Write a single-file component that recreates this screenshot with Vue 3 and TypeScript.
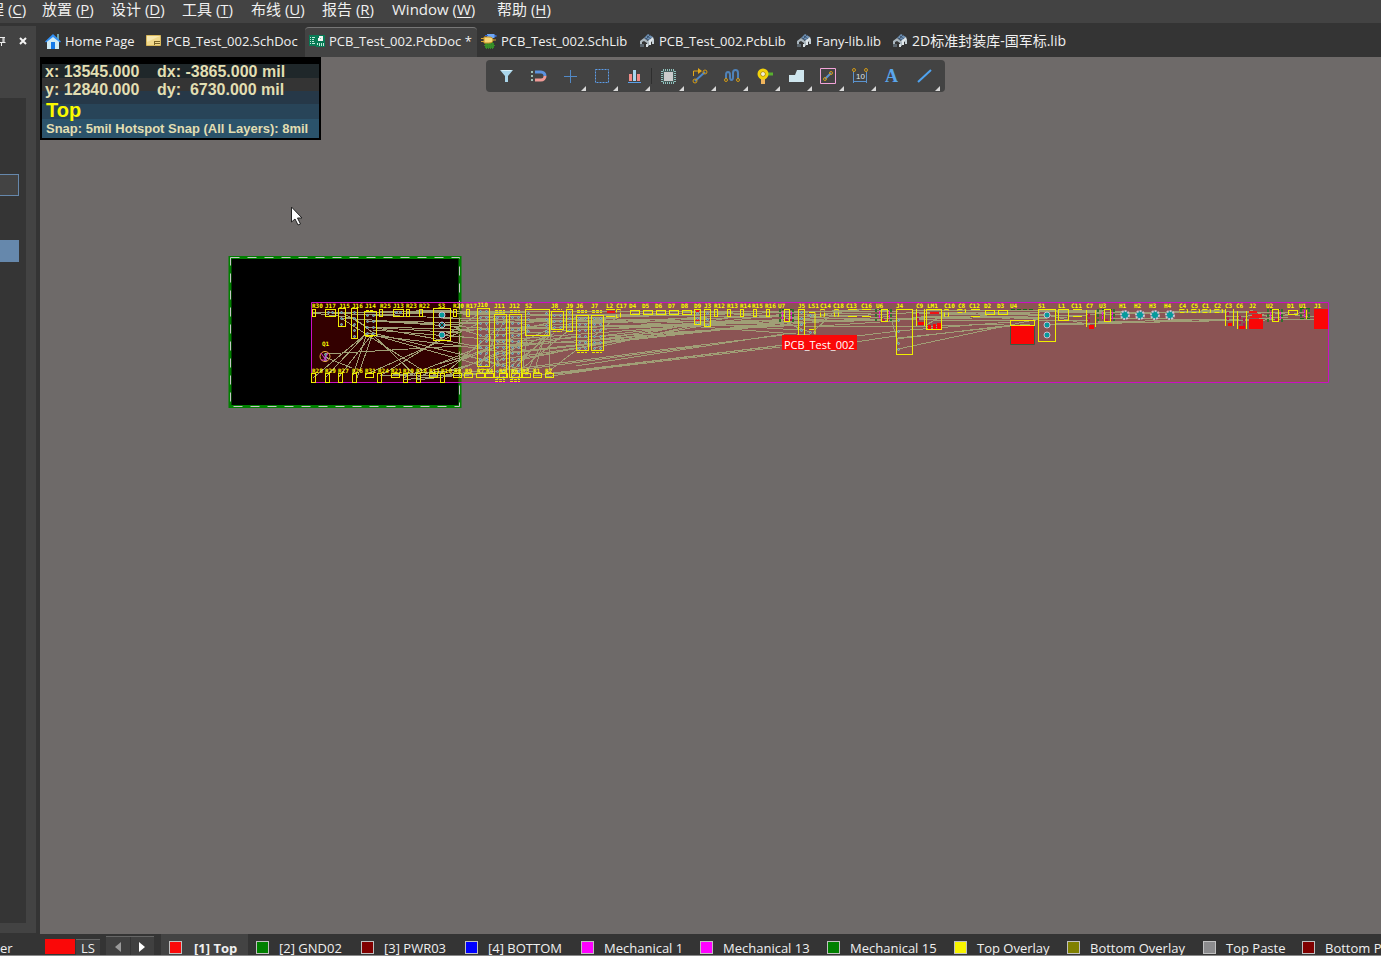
<script setup lang="ts">
interface Menu { label: string; key: string; width: number }
interface DocTab { title: string; icon: string; width: number; active?: boolean; large?: boolean }
interface Layer { name: string; color: string; width: number; active?: boolean }
type Box = [number, number, number, number]
type Tag = [string, number]
type Point = [number, number]

const menus: Menu[] = [
  { label: '程', key: 'C', width: 53 },
  { label: '放置', key: 'P', width: 69 },
  { label: '设计', key: 'D', width: 71 },
  { label: '工具', key: 'T', width: 69 },
  { label: '布线', key: 'U', width: 71 },
  { label: '报告', key: 'R', width: 70 },
  { label: 'Window', key: 'W', width: 105 },
  { label: '帮助', key: 'H', width: 70 },
]

const tabs: DocTab[] = [
  { title: 'Home Page', icon: 'home', width: 101 },
  { title: 'PCB_Test_002.SchDoc', icon: 'sch', width: 163 },
  { title: 'PCB_Test_002.PcbDoc *', icon: 'pcb', width: 172, active: true },
  { title: 'PCB_Test_002.SchLib', icon: 'schlib', width: 158 },
  { title: 'PCB_Test_002.PcbLib', icon: 'lib', width: 157 },
  { title: 'Fany-lib.lib', icon: 'lib', width: 96 },
  { title: '2D标准封装库-国军标.lib', icon: 'lib', width: 184, large: true },
]

const layers: Layer[] = [
  { name: '[1] Top', color: '#fa0a0a', width: 87, active: true },
  { name: '[2] GND02', color: '#008000', width: 105 },
  { name: '[3] PWR03', color: '#800000', width: 104 },
  { name: '[4] BOTTOM', color: '#0000ff', width: 116 },
  { name: 'Mechanical 1', color: '#ff00ff', width: 119 },
  { name: 'Mechanical 13', color: '#ff00ff', width: 127 },
  { name: 'Mechanical 15', color: '#008000', width: 127 },
  { name: 'Top Overlay', color: '#f8f400', width: 113 },
  { name: 'Bottom Overlay', color: '#808000', width: 136 },
  { name: 'Top Paste', color: '#8c8c8e', width: 99 },
  { name: 'Bottom Paste', color: '#800000', width: 120 },
]

const tools: { name: string; menu: boolean }[] = [
  { name: 'Filter', menu: false },
  { name: 'Snap', menu: false },
  { name: 'Move', menu: true },
  { name: 'Select', menu: true },
  { name: 'Align', menu: true },
  { name: 'Component', menu: true },
  { name: 'Route', menu: true },
  { name: 'Tune', menu: true },
  { name: 'Via', menu: true },
  { name: 'Polygon', menu: true },
  { name: 'Rule', menu: true },
  { name: 'Dimension', menu: true },
  { name: 'Text', menu: false },
  { name: 'Line', menu: true },
]

const topTags: Tag[] = [
  ['R30', 312], ['J17', 325], ['J15', 339], ['J16', 352], ['J14', 365], ['R25', 380], ['J13', 393], ['R23', 406],
  ['R22', 419], ['S3', 438], ['R20', 453], ['R17', 466], ['J11', 494], ['J12', 509], ['S2', 525],
  ['J8', 551], ['J9', 566], ['J6', 576], ['J7', 591], ['L2', 606], ['C17', 616], ['D4', 629], ['D5', 642],
  ['D6', 655], ['D7', 668], ['D8', 681], ['D9', 694], ['J3', 704], ['R12', 714], ['R13', 727], ['R14', 740],
  ['R15', 752], ['R16', 765], ['U7', 778], ['J5', 798], ['LS1', 808], ['C14', 820], ['C18', 833], ['C13', 846],
  ['C16', 861], ['U6', 876], ['J4', 896], ['C9', 916], ['LM1', 927], ['C10', 944], ['C8', 958], ['C12', 969],
  ['D2', 984], ['D3', 997], ['U4', 1010], ['S1', 1038], ['L1', 1058], ['C11', 1071], ['C7', 1086], ['U3', 1099],
  ['H1', 1119], ['H2', 1134], ['H3', 1149], ['H4', 1164], ['C4', 1179], ['C5', 1191], ['C1', 1202], ['C2', 1214],
  ['C3', 1225], ['C6', 1236], ['J2', 1249], ['U2', 1266], ['D1', 1287], ['U1', 1299], ['J1', 1314],
]

const bottomTags: Tag[] = [
  ['R28', 312], ['R29', 325], ['R27', 338], ['R26', 352], ['R31', 365], ['R24', 378], ['R21', 391], ['R19', 403],
  ['R18', 416], ['R11', 429], ['R10', 441], ['R8', 454], ['R9', 465], ['R7', 477], ['R4', 486], ['R5', 499],
  ['R6', 511], ['R3', 522], ['R1', 533], ['R2', 545],
]

const headers: Box[] = [
  [325, 309, 10, 7], [338, 308, 7, 18], [351, 308, 6, 30], [364, 311, 12, 24], [393, 309, 10, 7],
  [433, 308, 17, 32], [477, 308, 12, 58], [494, 314, 12, 63], [509, 314, 12, 63], [525, 309, 24, 26],
  [551, 311, 12, 18], [566, 309, 6, 22], [576, 315, 12, 35], [591, 315, 12, 35], [694, 309, 6, 15],
  [704, 309, 6, 17], [784, 309, 5, 12], [798, 309, 6, 26], [881, 309, 6, 12], [896, 309, 16, 45],
  [926, 309, 15, 20], [1010, 320, 24, 5], [1038, 309, 17, 32], [1058, 309, 10, 11], [1104, 309, 6, 12],
  [1272, 309, 6, 12],
]
const upright = [312, 379, 406, 419, 453, 466, 714, 727, 740, 753, 766]
const diodes = [630, 643, 656, 669, 682, 985, 998, 1288]
const lowTall = [311, 325, 338, 352, 377, 403, 416, 440]
const lowFlat = [365, 391, 429, 453, 464, 476, 485, 499, 511, 522, 533, 545]
const boxes: Box[] = [
  ...headers,
  ...upright.map((x): Box => [x, 309, 3, 7]),
  ...diodes.map((x): Box => [x, 310, 9, 4]),
  ...lowTall.map((x): Box => [x, 373, 4, 9]),
  ...lowFlat.map((x): Box => [x, 373, 8, 4]),
]
const gapped: Box[] = [
  [616, 309, 4, 8], [820, 309, 4, 7], [834, 309, 4, 7], [944, 309, 4, 7], [957, 309, 8, 3],
  [1179, 309, 8, 3], [1191, 309, 8, 3], [1202, 309, 8, 3], [1214, 309, 8, 3],
]
const caps: Box[] = [
  [916, 309, 8, 17], [1086, 310, 9, 17], [1225, 309, 8, 17], [1237, 311, 9, 18],
]
const bars = [606, 848, 862, 971, 1073]

function pads(x: number, y: number, cols: number, rows: number, dx: number, dy: number): Point[] {
  const out: Point[] = []
  for (let r = 0; r < rows; r++) for (let c = 0; c < cols; c++) out.push([x + c * dx, y + r * dy])
  return out
}
const smallPads: Point[] = [
  ...pads(328, 312, 2, 1, 4, 6), ...pads(341, 312, 1, 3, 6, 6), ...pads(354, 312, 1, 5, 6, 6),
  ...pads(367, 315, 2, 4, 6, 6), ...pads(396, 312, 2, 1, 4, 6), ...pads(480, 311, 2, 10, 6, 6),
  ...pads(497, 317, 2, 11, 6, 6), ...pads(512, 317, 2, 11, 6, 6), ...pads(528, 313, 2, 4, 18, 6),
  ...pads(554, 315, 2, 3, 6, 6), ...pads(569, 312, 1, 4, 6, 6), ...pads(579, 318, 2, 6, 6, 6),
  ...pads(594, 318, 2, 6, 6, 6), ...pads(697, 313, 1, 3, 6, 5), ...pads(707, 313, 1, 3, 6, 6),
  ...pads(801, 312, 1, 4, 6, 6), [898, 320], [898, 331], [898, 343], [898, 349],
  ...pads(810, 315, 2, 1, 4, 0), ...pads(810, 332, 2, 1, 4, 0), ...pads(325, 354, 1, 3, 0, 3),
]
const bigPads: Point[] = [
  [442, 315], [442, 325], [442, 335], [1047, 315], [1047, 325], [1047, 335],
]
const holes: Point[] = [[1125, 315], [1140, 315], [1155, 315], [1170, 315]]

const nets: Box[] = [
  [313, 312, 370, 315], [313, 313, 354, 318], [329, 312, 396, 312], [341, 318, 433, 324], [341, 312, 367, 327],
  [354, 318, 373, 333], [367, 315, 480, 311], [373, 315, 453, 318], [367, 321, 480, 323], [373, 321, 497, 329],
  [373, 327, 528, 331], [373, 330, 512, 341], [367, 327, 461, 333], [367, 333, 480, 365], [373, 333, 545, 375],
  [367, 333, 325, 378], [367, 333, 313, 378], [373, 333, 338, 378], [367, 333, 352, 378], [373, 333, 357, 378],
  [371, 333, 418, 378], [376, 336, 461, 346], [371, 327, 480, 347], [325, 354, 442, 347], [442, 347, 576, 342],
  [325, 357, 352, 368], [341, 318, 422, 370], [380, 376, 442, 338], [442, 338, 477, 315], [365, 375, 405, 357],
  [405, 357, 480, 323], [403, 378, 480, 347], [416, 378, 528, 331], [429, 376, 512, 353], [441, 378, 554, 327],
  [380, 376, 461, 370], [391, 375, 461, 375], [403, 380, 480, 371], [416, 380, 497, 371], [380, 312, 453, 310],
  [393, 311, 525, 313], [406, 312, 554, 315], [419, 311, 569, 312], [442, 318, 554, 321], [442, 325, 569, 318],
  [442, 332, 569, 324], [442, 335, 528, 343], [451, 326, 525, 350], [435, 365, 497, 347], [450, 369, 497, 329],
  [461, 314, 700, 316], [461, 321, 800, 312], [461, 312, 896, 311], [480, 317, 784, 311], [480, 323, 870, 315],
  [480, 329, 925, 318], [486, 335, 925, 312], [486, 341, 800, 318], [497, 347, 896, 316], [503, 353, 784, 322],
  [512, 329, 898, 320], [518, 341, 784, 326], [512, 353, 784, 323], [518, 359, 707, 325], [497, 365, 700, 322],
  [461, 376, 660, 350], [660, 350, 784, 335], [512, 371, 700, 346], [533, 376, 784, 345], [545, 377, 660, 360],
  [545, 374, 898, 331], [555, 374, 780, 347], [576, 366, 784, 334], [518, 323, 700, 312], [554, 321, 714, 321],
  [569, 324, 727, 316], [576, 324, 707, 319], [585, 330, 784, 321], [600, 336, 784, 314], [594, 348, 700, 324],
  [579, 342, 707, 330], [600, 318, 800, 330], [579, 318, 810, 335], [585, 342, 740, 316], [569, 330, 512, 377],
  [554, 327, 512, 371], [551, 327, 525, 375], [551, 321, 549, 372], [546, 331, 533, 376], [616, 318, 594, 336],
  [579, 348, 545, 374], [554, 333, 499, 375], [528, 337, 486, 372], [528, 325, 522, 375], [503, 323, 477, 371],
  [486, 323, 499, 365], [488, 317, 528, 325], [503, 335, 554, 321], [518, 329, 576, 318], [518, 347, 576, 336],
  [503, 359, 576, 348], [461, 346, 512, 353], [461, 353, 528, 375], [461, 360, 497, 347], [461, 368, 545, 337],
  [700, 312, 784, 317], [700, 317, 872, 313], [700, 322, 866, 318], [707, 325, 898, 327], [784, 320, 801, 330],
  [784, 322, 810, 332], [815, 330, 832, 314], [804, 321, 878, 320], [804, 327, 896, 321], [855, 342, 896, 336],
  [784, 313, 881, 309], [790, 318, 868, 309], [870, 309, 898, 312], [891, 318, 898, 343],
  [898, 320, 1010, 317], [898, 331, 1010, 322], [896, 339, 1012, 325], [898, 338, 1030, 324], [898, 349, 1038, 319],
  [898, 327, 1005, 324], [912, 311, 1104, 310], [912, 314, 1104, 311], [912, 318, 1086, 315], [920, 316, 1047, 318],
  [925, 312, 1030, 314], [926, 325, 946, 314], [935, 321, 1038, 320], [940, 314, 1047, 315], [957, 312, 1010, 319],
  [980, 317, 1047, 319], [1038, 321, 1090, 320], [1047, 325, 1237, 320], [1047, 315, 1090, 325],
  [1055, 312, 1179, 313], [1058, 318, 1125, 311], [1055, 323, 1120, 323], [1098, 323, 1321, 319],
  [1098, 322, 1240, 319], [1104, 315, 1225, 310], [1110, 318, 1230, 320], [1170, 311, 1249, 312],
  [1179, 312, 1290, 313], [1225, 317, 1272, 315], [1230, 321, 1288, 317], [1250, 310, 1272, 318], [1275, 313, 1315, 317],
  [1283, 316, 1305, 312],
]
</script>

<template>
  <div class="app">
    <nav class="menubar" aria-label="Main menu">
      <button v-for="m in menus" :key="m.label" type="button" class="menu" :style="{ width: m.width + 'px' }">
        {{ m.label }} (<u>{{ m.key }}</u>)
      </button>
    </nav>

    <div class="middle">
      <aside class="side">
        <div class="side-head">
          <button type="button" aria-label="Pin panel">
            <svg width="10" height="10" viewBox="0 0 10 10" fill="none" stroke="#eee"><path d="M1 1.500H8M2.500 1V6M6 1V6M7 1V6M0 6.500H8.500M4.500 7V10" /></svg>
          </button>
          <button type="button" aria-label="Close panel">
            <svg width="8" height="8" viewBox="0 0 8 8" stroke="#f4f4f4" stroke-width="2"><path d="M1 1L7 7M7 1L1 7" /></svg>
          </button>
        </div>
        <div class="side-body">
          <input class="side-input" type="text" aria-label="Search" />
          <div class="side-selected"></div>
        </div>
      </aside>

      <main class="work">
        <nav class="tabs" aria-label="Documents">
          <button v-for="t in tabs" :key="t.title" type="button" class="tab" :class="{ active: t.active, large: t.large }" :style="{ width: t.width + 'px' }">
            <svg v-if="t.icon === 'home'" class="ticon" viewBox="0 0 16 16">
              <path d="M12 1h2v6h-2z" fill="#6aa0a8" /><path d="M2 8L8 3l6 5v8H2z" fill="#cfeaf4" />
              <path d="M0 8.500L8 1l8 7.500-1 1L8 4 1 9.500z" fill="#2f8ff5" /><path d="M6 9h4v7H6z" fill="#1479e8" />
            </svg>
            <svg v-else-if="t.icon === 'sch'" class="ticon" viewBox="0 0 16 16">
              <path d="M.5 2.500h14v10H.5z" fill="#f1d98c" stroke="#d9b85c" /><path d="M1 3h13L1 9z" fill="#f8e8b0" />
              <path d="M8 8.500h6M8 10.500h6M8.500 8v4" stroke="#7a6428" />
            </svg>
            <svg v-else-if="t.icon === 'pcb'" class="ticon" viewBox="0 0 16 16">
              <path d="M0 2h16v12H7v-1H0z" fill="#087a55" /><path d="M1 4.500h1M3 4.500h3M1 6.500h1M3 6.500h2M1 8.500h1M3 8.500h2M1 10.500h1M3 10.500h3" stroke="#bfeadb" />
              <path d="M10 3h4v5H9V5h1z" fill="#f2f6f4" /><path d="M11 5h1v1h-1z" fill="#7cc5ab" />
              <path d="M8.500 10v2M10.500 10v3M12.500 10v3M14.500 10v3" stroke="#bfeadb" />
            </svg>
            <svg v-else-if="t.icon === 'schlib'" class="ticon" viewBox="0 0 16 16">
              <path d="M6 1h7l2 2-2 2H6z" fill="#6ea6f4" /><path d="M4 2.500h3M13 3h3" stroke="#2d65d8" />
              <path d="M4 10h9v5H4z" fill="#2f8c25" /><path d="M5.500 9v7M7.500 9v7M9.500 9v7M11.500 9v7M3 12.500h11" stroke="#3a8c2a" />
              <path d="M3 4h5c3 0 4 1.500 4 3s-1 3-4 3H3z" fill="#f8d678" stroke="#c18f24" /><path d="M0 5.500h3M0 8.500h3M12 7h3" stroke="#d8a32f" />
            </svg>
            <svg v-else class="ticon" viewBox="0 0 16 16">
              <path d="M5 5l4-4 5 3-4 4z" fill="#6f91b4" /><path d="M6 5l4 2M8 3l4 3M7 6l4-4" stroke="#3e5672" />
              <path d="M9 8l5-4 1 3-3 2v3h-2z" fill="#dfe6ea" /><path d="M13 7h2v4h-2z" fill="#c4ced4" />
              <path d="M1 8l4-3 5 4v4l-2-1v-2L5 8 3 9v2H1z" fill="#aab6be" />
              <path d="M1 11h4v3H1z" fill="#5c666e" /><path d="M7 11h2v3H7z" fill="#d8dfe3" />
            </svg>
            <span>{{ t.title }}</span>
          </button>
        </nav>

        <section class="canvas">
          <div class="hud">
            <div class="row r1"><span>x: 13545.000</span><span>dx: -3865.000 mil</span></div>
            <div class="row r2"><span>y: 12840.000</span><span>dy: &nbsp;6730.000 mil</span></div>
            <div class="row r3">Top</div>
            <div class="row r4">Snap: 5mil Hotspot Snap (All Layers): 8mil</div>
          </div>

          <div class="toolbar" role="toolbar" aria-label="Placement tools">
            <button v-for="(tool, i) in tools" :key="tool.name" type="button" class="tool" :class="{ divided: i === 5, menu: tool.menu }" :aria-label="tool.name">
              <svg width="18" height="18" viewBox="0 0 18 18" fill="none">
                <g v-if="i === 0"><path d="M3 3h13l-5 6v6H8V9z" fill="#a9d5ea" /><path d="M4 3h11l-1 1H5z" fill="#d9f0f8" /></g>
                <g v-else-if="i === 1">
                  <path d="M6 5h6a4 4 0 0 1 4 4" stroke="#5b92e0" stroke-width="3" /><path d="M6 13h6a4 4 0 0 0 4-4" stroke="#f09a96" stroke-width="3" />
                  <path d="M2 4h2v2H2zM2 8h2v2H2zM2 12h2v2H2z" fill="#9fc0b8" />
                </g>
                <path v-else-if="i === 2" d="M9.500 3v13M3 9.500h13" stroke="#5289c6" />
                <path v-else-if="i === 3" d="M2.500 2.500h13v13h-13z" stroke="#5d9de8" stroke-dasharray="2 1" />
                <g v-else-if="i === 4"><path d="M4 7h3v7H4z" fill="#f08c88" /><path d="M12 7h3v7h-3z" fill="#f08c88" /><path d="M8 3h3v11H8z" fill="#a6d8f0" /><path d="M3 15.500h13" stroke="#5aa0ea" /></g>
                <g v-else-if="i === 5">
                  <path d="M2 4.500h15M2 6.500h15M2 8.500h15M2 10.500h15M2 12.500h15M2 14.500h15M4.500 2v15M6.500 2v15M8.500 2v15M10.500 2v15M12.500 2v15M14.500 2v15" stroke="#8fc2bd" />
                  <path d="M4.500 4.500h10v10h-10z" fill="#cbcbcb" stroke="#47605e" />
                </g>
                <g v-else-if="i === 6">
                  <path d="M4 14L14 5" stroke="#4d86c8" stroke-width="2" /><circle cx="4" cy="14" r="2" stroke="#d29a15" /><circle cx="14" cy="5" r="2" stroke="#d29a15" />
                  <path d="M2.500 9V4H8" stroke="#e3a718" /><path d="M7 1l4 3-4 3z" fill="#e3a718" />
                </g>
                <g v-else-if="i === 7">
                  <path d="M3 12V8c0-4 4-4 4 0v2c0 4 3 4 3 0V6c0-4 5-4 5 0v6" stroke="#4f82b8" stroke-width="2" />
                  <circle cx="3" cy="13" r="1.500" stroke="#d29a15" /><circle cx="15" cy="13" r="1.500" stroke="#d29a15" />
                </g>
                <g v-else-if="i === 8"><path d="M12 7h6" stroke="#58b12f" stroke-width="3" /><path d="M8 11v6" stroke="#f0b45c" stroke-width="4" /><circle cx="8" cy="7" r="4" fill="#8d6c00" stroke="#f2d20b" stroke-width="3" /><circle cx="8" cy="7" r="2" fill="#f4f0cd" /></g>
                <g v-else-if="i === 9"><path d="M2 8h6l2-5h7v12H2z" fill="#cfe6ee" /></g>
                <g v-else-if="i === 10"><path d="M1.500 1.500h15v15h-15z" stroke="#f3a4d9" /><path d="M6 12l6-6" stroke="#5b93ce" stroke-width="2" /><circle cx="6" cy="12" r="1.500" stroke="#d29a15" /><circle cx="12" cy="6" r="1.500" stroke="#d29a15" /></g>
                <g v-else-if="i === 11">
                  <path d="M2.500 4v12M15.500 4v12M3 14.500h12" stroke="#5b93ce" /><circle cx="3" cy="3" r="1.500" stroke="#d29a15" /><circle cx="15" cy="3" r="1.500" stroke="#d29a15" />
                  <text x="5" y="12" class="ten">10</text>
                </g>
                <text v-else-if="i === 12" x="2" y="15" class="big-a">A</text>
                <path v-else d="M3 15L16 3" stroke="#4fa3f0" stroke-width="2" />
              </svg>
            </button>
          </div>

          <svg class="board" width="1110" height="162" viewBox="225 250 1110 162">
            <path d="M230 257.500H460V406.500H230z" fill="#000" stroke="#008000" stroke-width="3" />
            <path d="M230.500 257.500H459.500V406.500H230.500z" fill="none" stroke="#c4c4c4" stroke-dasharray="9 8" />
            <path d="M311 302H1329V383H311z" fill="#f00" fill-opacity=".2" />
            <g stroke="#a09f76" stroke-width="1" shape-rendering="crispEdges"><line v-for="(n, i) in nets" :key="i" :x1="n[0]" :y1="n[1]" :x2="n[2]" :y2="n[3]" /></g>
            <path d="M311.500 302.500H1328.500V382.500H311.500z" fill="none" stroke="#cc0fc4" />

            <path d="M1314 309h14v20h-14zM1249 319h14v10h-14z" fill="#fa0505" />
            <path d="M1249 312h8M1252 315h10M1250 317h12M930 313h9M607 312h8M696 311h3M696 320h3" stroke="#f01414" stroke-width="2" />
            <path d="M1010.500 325.500h24v19h-24z" fill="#fa0505" stroke="#3b5a42" />
            <path d="M918 322h6v3h-6zM928 325h3v4h-3zM933 324h3v5h-3zM937 323h4v6h-4zM1089 325h5v4h-5zM1228 323h4v3h-4zM1239 326h6v3h-6z" fill="#fa0505" />
            <path d="M780 309v13M793 309v13M876 309v12M891 309v12M1098 309v12M1114 309v12M1268 309v13M1282 309v13M1301 309v10M1309 309v10" stroke="#307030" stroke-width="2" stroke-dasharray="3 2" />
            <path d="M782 309.500h10M879 309.500h10M1011 309.500h22M1102 309.500h10M1270 309.500h12M1300 308.500h10M1300 318.500h10" stroke="#147014" stroke-dasharray="4 2" />
            <path d="M782.500 312v8M791.500 312v8M879.500 311v8M889.500 311v8M1102.500 312v8M1112.500 312v8M1270.500 312v8M1280.500 312v8M1304.500 310v8" stroke="#f012d8" stroke-dasharray="3 1" />
            <path d="M785 320h7M882 320h7M1105 320h7M1275 320h5M1228 312v8M1240 316v8M1244 318v8M918 313v8M1089 314v8" stroke="#b01a50" stroke-dasharray="3 2" stroke-width="2" />

            <g fill="#369ba2" stroke="#a3a9b0">
              <circle v-for="(p, i) in smallPads" :key="i" :cx="p[0] + 0.5" :cy="p[1] + 0.5" r="1" />
            </g>
            <g fill="none" stroke="#f0ee00">
              <rect v-for="(b, i) in boxes" :key="i" :x="b[0] + 0.5" :y="b[1] + 0.5" :width="b[2]" :height="b[3]" />
              <rect v-for="(b, i) in gapped" :key="'g' + i" :x="b[0] + 0.5" :y="b[1] + 0.5" :width="b[2]" :height="b[3]" stroke-dasharray="5 2" />
              <path v-for="(b, i) in caps" :key="'c' + i" :d="`M${b[0] + 0.5} ${b[1]}v${b[3]}M${b[0] + b[2] + 0.5} ${b[1]}v${b[3]}`" />
              <path v-for="x in bars" :key="x" :d="`M${x} 309.500h9M${x} 316.500h9`" />
              <path d="M809 312.500h6v22M1306.500 310v9M809 329.500h5" />
              <circle cx="325" cy="356.500" r="5" stroke="#f0b040" />
              <path d="M321 353l4 6 3-6M321 360h6" stroke="#d030d0" />
            </g>
            <g fill="#069a9c" stroke="#cbbfd0" stroke-width="1">
              <circle v-for="(p, i) in bigPads" :key="i" :cx="p[0]" :cy="p[1]" r="3" />
              <circle v-for="(p, i) in holes" :key="'h' + i" :cx="p[0]" :cy="p[1]" r="4" stroke-width="2" stroke-dasharray="2 1" />
            </g>
            <path d="M439 322l6 6M445 322l-6 6" stroke="#401414" />
            <g class="tag">
              <text v-for="t in topTags" :key="t[0]" :x="t[1]" y="308">{{ t[0] }}</text>
              <text x="477" y="307">J10</text>
              <text v-for="t in bottomTags" :key="t[0]" :x="t[1]" y="373">{{ t[0] }}</text>
              <text x="322" y="346">Q1</text>
            </g>
            <g class="pins">
              <path d="M366 310.500h8M366 336.500h8M495 310.500h10M495 312.500h10M510 310.500h10M510 312.500h10M495 379.500h10M495 381.500h10M510 379.500h10M510 381.500h10M553 309.500h9M553 331.500h9M577 310.500h10M577 312.500h10M592 310.500h10M592 312.500h10M577 352.500h10M592 352.500h10M479 369.500h10" />
            </g>
            <path d="M782 335h75v15h-75z" fill="#fa0808" />
            <text x="784" y="349" class="room">PCB_Test_002</text>
          </svg>

          <svg class="cursor" width="12" height="20" viewBox="0 0 12 20"><path d="M.5 1v15l3.500-3 3 6 2.500-1-3-6H11z" fill="#fff" stroke="#222" /></svg>
        </section>
      </main>
    </div>

    <footer class="layers">
      <span class="er">er</span>
      <span class="current"></span>
      <button type="button" class="ls">LS</button>
      <div class="nav">
        <button type="button" aria-label="Previous layer"><svg width="6" height="10" viewBox="0 0 6 10"><path d="M6 0v10L0 5z" fill="#9a9a9a" /></svg></button>
        <button type="button" aria-label="Next layer"><svg width="6" height="10" viewBox="0 0 6 10"><path d="M0 0v10l6-5z" fill="#fff" /></svg></button>
      </div>
      <button v-for="l in layers" :key="l.name" type="button" class="layer" :class="{ active: l.active }" :style="{ width: l.width + 'px' }">
        <i :style="{ background: l.color }"></i><span>{{ l.name }}</span>
      </button>
    </footer>
  </div>
</template>

<style>
body { margin: 0; overflow: hidden; background: #343434; }
</style>

<style scoped>
.app { height: 100vh; display: flex; flex-direction: column; overflow: hidden; color: #f0f0f0; font: 13px/20px "Open Sans", "Noto Sans CJK SC", sans-serif; }
button { margin: 0; padding: 0; border: 0; background: none; color: inherit; font: inherit; white-space: nowrap; text-align: left; }
.menubar { flex: none; height: 23px; display: flex; background: #434343; margin-left: -11px; }
.menu { flex: none; height: 18px; font-size: 15px; line-height: 18px; }
.menu u { text-underline-offset: 2px; }
.middle { flex: 1; min-height: 0; display: flex; }
.side { flex: none; width: 36px; margin: 3px 4px 1px 0; background: #434343; display: flex; flex-direction: column; }
.side-head { height: 72px; margin-left: -3px; display: flex; gap: 12px; align-items: flex-start; }
.side-head button { height: 30px; display: flex; align-items: center; }
.side-body { flex: 1; width: 26px; margin-bottom: 10px; background: #353535; }
.side-input { display: block; box-sizing: border-box; width: 19px; height: 22px; margin: 76px 0 44px; padding: 0; border: 1px solid #6688ac; border-left: 0; background: #434343; outline: 0; }
.side-selected { width: 19px; height: 22px; background: #6688ac; }
.work { flex: 1; min-width: 0; display: flex; flex-direction: column; }
.tabs { flex: none; height: 34px; display: flex; align-items: flex-end; background: #343434; padding-left: 1px; }
.tab { flex: none; height: 30px; box-sizing: border-box; padding: 0 4px 4px; display: flex; align-items: center; gap: 4px; border-top: 1px solid transparent; }
.tab.active { background: #434343; border-top-color: #777; border-radius: 4px 4px 0 0; }
.tab.large { font-size: 14px; }
.ticon { flex: none; width: 16px; height: 16px; }
.canvas { flex: 1; position: relative; background: #6e6a69; overflow: hidden; }
.hud { position: absolute; left: 0; top: 0; width: 281px; box-sizing: border-box; padding-top: 6px; border: 2px solid #000; border-top-width: 1px; background: #000; color: #e2deb2; font: bold 16px/18px "Liberation Sans", Arial, sans-serif; white-space: pre; }
.row { padding-left: 3px; display: flex; }
.row span:first-child { width: 112px; }
.r1 { height: 14px; line-height: 16px; background: #1f272a; }
.r2 { height: 26px; line-height: 23px; background: linear-gradient(#343434 50%, #263848 50%); }
.r3 { height: 15px; line-height: 12px; padding-left: 4px; font-size: 20px; color: #fafa00; background: #284458; }
.r4 { height: 19px; line-height: 19px; padding-left: 4px; font-size: 13px; background: #2b536b; }
.toolbar { position: absolute; left: 446px; top: 3px; height: 32px; padding: 0 5px 0 4px; display: flex; background: #434343; border-radius: 4px; }
.tool { position: relative; width: 32px; height: 32px; display: flex; align-items: center; justify-content: center; }
.tool svg { overflow: visible; }
.tool.divided { width: 34px; }
.tool.divided::before { content: ""; width: 1px; height: 16px; margin-right: 7px; background: #2e2e2e; }
.tool.divided svg { margin-right: 6px; }
.tool.menu::after { content: ""; position: absolute; right: 0; bottom: 1px; border: solid transparent; border-width: 0 0 5px 5px; border-bottom-color: #d8d8d8; }
.ten { font: 8px "Liberation Sans", Arial, sans-serif; fill: #dfe6ec; }
.big-a { font: bold 18px "Liberation Serif", serif; fill: #5aa6ec; }
.board { position: absolute; left: 185px; top: 193px; }
.tag { font: bold 6px "DejaVu Sans Mono", monospace; fill: #fcfa00; }
.pins { stroke: #e8e800; stroke-dasharray: 3 1; }
.room { font: 11px "Open Sans", sans-serif; fill: #fff; }
.cursor { position: absolute; left: 251px; top: 149px; }
.layers { flex: none; height: 22px; box-sizing: border-box; display: flex; background: #343434; border-bottom: 1px solid #8a8a8a; overflow: hidden; line-height: 28px; }
.er { flex: none; width: 45px; }
.current { flex: none; width: 30px; height: 15px; margin-top: 5px; background: #fa0808; }
.ls { flex: none; width: 24px; height: 16px; margin: 5px 6px 0 1px; text-align: center; line-height: 16px; background: #404040; border-top: 1px solid #666; }
.nav { flex: none; width: 48px; height: 20px; margin: 2px 7px 0 0; display: flex; border-top: 1px solid #666; background: #404040; }
.nav button { flex: 1; display: flex; align-items: center; justify-content: center; }
.nav button + button { border-left: 1px solid #343434; }
.layer { flex: none; height: 21px; padding-left: 8px; box-sizing: border-box; display: flex; gap: 10px; line-height: 28px; }
.layer.active { background: #434343; font-weight: bold; }
.layer.active span { padding-left: 2px; }
.layer i { flex: none; box-sizing: border-box; width: 13px; height: 13px; margin-top: 7px; border: 1px solid #c0c0c0; }
</style>
